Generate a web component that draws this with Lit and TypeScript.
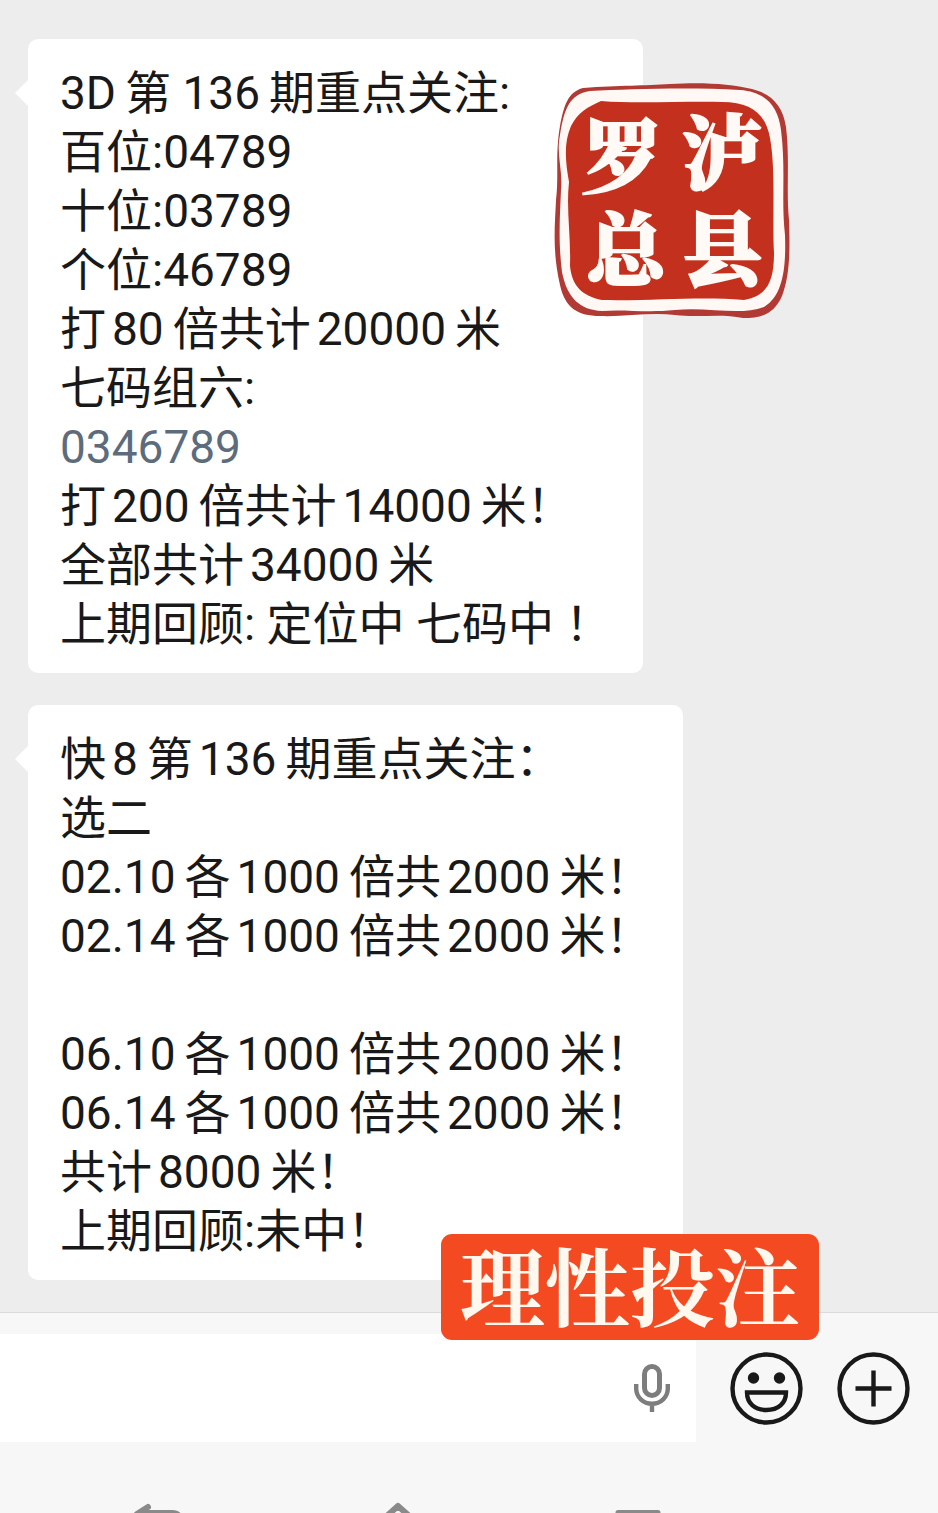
import { LitElement, html, css, svg } from 'lit';
import { customElement, property } from 'lit/decorators.js';

interface Line {
  text: string;
  link?: boolean;
}

const DRAW: Line[] = [
  { text: '3D第 136期重点关注:' },
  { text: '百位:04789' },
  { text: '十位:03789' },
  { text: '个位:46789' },
  { text: '打80倍共计20000米' },
  { text: '七码组六:' },
  { text: '0346789', link: true },
  { text: '打200倍共计14000米！' },
  { text: '全部共计34000米' },
  { text: '上期回顾: 定位中 七码中 ！' },
];

const KUAI8: Line[] = [
  { text: '快8第136期重点关注：' },
  { text: '选二' },
  { text: '02.10各1000倍共2000米！' },
  { text: '02.14各1000倍共2000米！' },
  { text: '' },
  { text: '06.10各1000倍共2000米！' },
  { text: '06.14各1000倍共2000米！' },
  { text: '共计8000米！' },
  { text: '上期回顾:未中！' },
];

@customElement('chat-bubble')
export class ChatBubble extends LitElement {
  @property({ attribute: false }) lines: Line[] = [];

  static styles = css`
    :host {
      display: block;
      position: relative;
      box-sizing: border-box;
      max-width: 100%;
      padding: 25px 32px 19px;
      border-radius: 10px;
      background: #fff;
      color: #191919;
      font-size: 46px;
      line-height: 59px;
    }
    :host::before {
      content: '';
      position: absolute;
      left: -13px;
      top: 40px;
      width: 14px;
      height: 28px;
      background: #fff;
      clip-path: polygon(0 50%, 100% 0, 100% 100%);
    }
    p {
      margin: 0;
      min-height: 59px;
    }
    a {
      color: #5c6c7d;
      text-decoration: none;
    }
    /* breathing room between digits and han characters */
    .before {
      margin-left: 6px;
    }
    .after {
      margin-right: 9px;
    }
  `;

  renderText(text: string) {
    const parts = text.split(/([0-9][0-9A-Z.]*)/);
    return parts.map((part, i) => {
      if (i % 2 === 0) return part;
      const before = /[\u4e00-\u9fff]$/.test(parts[i - 1]) ? 'before' : '';
      const after = /^[\u4e00-\u9fff]/.test(parts[i + 1]) ? 'after' : '';
      return html`<span class="${before} ${after}">${part}</span>`;
    });
  }

  render() {
    return this.lines.map(
      (line) => html`<p>${line.link
        ? html`<a href="#${line.text}">${line.text}</a>`
        : this.renderText(line.text)}</p>`
    );
  }
}

const micIcon = svg`
  <svg width="36" height="48" viewBox="0 0 36 48" fill="none" stroke="#7d7d7d">
    <rect x="10.5" y="2.5" width="15" height="29" rx="7.5" stroke-width="5" />
    <path d="M2.2 20v4.500a15.800 15.300 0 0 0 31.600 0V20M18 40v8" stroke-width="4.400" />
  </svg>`;

const smileIcon = svg`
  <svg width="73" height="73" viewBox="0 0 73 73" fill="none" stroke="#191919" stroke-width="4.400">
    <circle cx="36.5" cy="36.5" r="34" />
    <circle cx="23.5" cy="26" r="5.700" fill="#191919" stroke="none" />
    <circle cx="49.5" cy="26" r="5.700" fill="#191919" stroke="none" />
    <path d="M17 40.500h39c0 11-8 17.500-19.500 17.500S17 51.500 17 40.500z" />
  </svg>`;

const plusIcon = svg`
  <svg width="73" height="73" viewBox="0 0 73 73" fill="none" stroke="#191919" stroke-width="4.400">
    <circle cx="36.5" cy="36.5" r="34" />
    <path d="M36.500 18.500v36M18.500 36.500h36" />
  </svg>`;

@customElement('app-root')
export class AppRoot extends LitElement {
  static styles = css`
    :host {
      display: flex;
      flex-direction: column;
      height: 100vh;
      overflow: hidden;
      background: #f7f7f7;
      font-family: Roboto, 'Noto Sans CJK SC', sans-serif;
    }
    main {
      position: relative;
      flex: none;
      display: flex;
      flex-direction: column;
      align-items: flex-start;
      gap: 32px;
      padding: 39px 28px 32px;
      background: #ededed;
    }
    .seal {
      position: absolute;
      top: 70px;
      right: 138px;
    }
    .seal text {
      font: 900 80px 'Liberation Serif', 'Noto Serif CJK SC', 'Noto Sans CJK SC', serif;
      fill: #fffaf5;
      stroke: #fffaf5;
      stroke-width: 2px;
    }
    .notice {
      position: absolute;
      right: 119px;
      bottom: -28px;
      z-index: 1;
      padding: 0 19px 8px;
      border-radius: 11px;
      background: #f44a22;
      color: #fff8ef;
      font: 700 85px/98px 'Noto Serif CJK SC', 'Noto Sans CJK SC', serif;
    }
    footer {
      flex: none;
      border-top: 1px solid #dadada;
    }
    .composer {
      display: flex;
      align-items: center;
      gap: 34px;
      padding: 21px 28px 0 0;
    }
    .field {
      flex: 1;
      min-width: 0;
      display: flex;
      align-items: center;
      height: 108px;
      padding-right: 26px;
      background: #fff;
    }
    input {
      flex: 1;
      min-width: 0;
      height: 100%;
      box-sizing: border-box;
      padding: 0 28px;
      border: 0;
      outline: 0;
      background: none;
      font: inherit;
      font-size: 46px;
    }
    button {
      flex: none;
      padding: 0;
      border: 0;
      background: none;
      cursor: pointer;
    }
    svg {
      display: block;
    }
    nav {
      display: flex;
      justify-content: space-around;
      padding: 60px 180px 0 38px;
    }
  `;

  render() {
    return html`
      <main>
        <chat-bubble .lines=${DRAW}></chat-bubble>
        <chat-bubble .lines=${KUAI8}></chat-bubble>

        <svg class="seal" width="260" height="260" viewBox="0 0 260 260">
          <path
            fill="#b23a34"
            d="M43 18C80 15 105 16 130 14C165 12 190 14 212 19C232 24 243 36 246 57C250 90 246 120 249 150C250 180 250 205 242 226C234 244 222 248 203 248C180 243 160 248 135 245C110 242 85 247 60 246C38 246 25 238 20 215C12 180 15 155 16 130C19 105 15 85 20 56C24 35 28 22 43 18Z"
          />
          <path
            fill="#fff8f4"
            d="M50 21C90 19 150 17 200 20C226 22 238 36 241 60C246 100 241 130 245 165C246 195 244 225 224 237C200 246 170 237 135 240C105 243 85 239 62 241C40 240 27 228 22 202C18 170 20 145 21 120C23 100 16 85 20 65C24 40 29 24 50 21Z"
          />
          <path
            fill="#c4301e"
            d="M61 31C95 34 145 31 182 32C212 32 226 45 230 68C236 100 232 150 234 183C234 210 228 226 204 230C160 226 115 231 62 230C42 226 32 216 30 196C31 165 26 140 29 112C25 90 24 72 31 56C38 42 48 37 61 31Z"
          />
          <text x="42" y="116">罗</text>
          <text x="142" y="112">泸</text>
          <text x="46" y="209">总</text>
          <text x="142" y="209">县</text>
        </svg>

        <div class="notice">理性投注</div>
      </main>

      <footer>
        <div class="composer">
          <div class="field">
            <input type="text" aria-label="消息" />
            <button aria-label="语音">${micIcon}</button>
          </div>
          <button aria-label="表情">${smileIcon}</button>
          <button aria-label="更多">${plusIcon}</button>
        </div>
        <nav>
          <button aria-label="返回">
            <svg width="48" height="42" viewBox="0 0 48 42" fill="none" stroke="#8a8a8a" stroke-width="6" stroke-linecap="round" stroke-linejoin="round">
              <path d="M14 5L3 12L14 20M5 11H38C44 11 46 14 46 19V28C46 34 43 37 38 37H8" />
            </svg>
          </button>
          <button aria-label="主页">
            <svg width="48" height="42" viewBox="0 0 48 42" fill="none" stroke="#8a8a8a" stroke-width="6" stroke-linecap="round" stroke-linejoin="round">
              <path d="M5 21L24 4L43 21V39H5Z" />
            </svg>
          </button>
          <button aria-label="最近任务">
            <svg width="48" height="42" viewBox="0 0 48 42" fill="none" stroke="#8a8a8a" stroke-width="5" stroke-linejoin="round">
              <path d="M4 10.500H44V39H4Z" />
            </svg>
          </button>
        </nav>
      </footer>
    `;
  }
}
